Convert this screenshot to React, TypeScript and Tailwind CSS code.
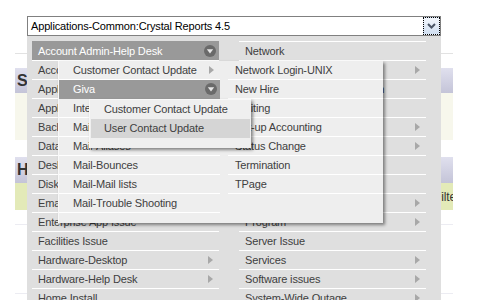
import React from 'react';

type Item = { label: string; sub?: boolean; hl?: boolean };

const leftItems: Item[] = [
  { label: 'Account Admin-Help Desk', hl: true },
  { label: 'Accounts' },
  { label: 'Application Issue' },
  { label: 'Applications-Common' },
  { label: 'Backup' },
  { label: 'Database' },
  { label: 'Desktop' },
  { label: 'Disk Space' },
  { label: 'Email' },
  { label: 'Enterprise App Issue' },
  { label: 'Facilities Issue' },
  { label: 'Hardware-Desktop', sub: true },
  { label: 'Hardware-Help Desk', sub: true },
  { label: 'Home Install' },
];

const rightItems: Item[] = [
  { label: 'Network' },
  { label: 'Network Services', sub: true },
  { label: 'Operating System Installation' },
  { label: 'Password Reset' },
  { label: 'Phones', sub: true },
  { label: 'Printers', sub: true },
  { label: 'Procedures' },
  { label: 'Procurement' },
  { label: 'Product', sub: true },
  { label: 'Program', sub: true },
  { label: 'Server Issue' },
  { label: 'Services', sub: true },
  { label: 'Software issues', sub: true },
  { label: 'System-Wide Outage', sub: true },
];

const subLeft: Item[] = [
  { label: 'Customer Contact Update', sub: true },
  { label: 'Giva', hl: true },
  { label: 'Internet' },
  { label: 'Mail' },
  { label: 'Mail-Aliases' },
  { label: 'Mail-Bounces' },
  { label: 'Mail-Mail lists' },
  { label: 'Mail-Trouble Shooting' },
];

const subRight = ['Network Login-UNIX', 'New Hire', 'Waiting', 'Set-up Accounting', 'Status Change', 'Termination', 'TPage'];

function Arrow() {
  return (
    <svg width="5" height="8" viewBox="0 0 5 8" className="shrink-0">
      <polygon points="0,0 5,4 0,8" fill="#a8a8a8" />
    </svg>
  );
}

function DownCircle() {
  return (
    <svg width="12" height="12" viewBox="0 0 12 12" className="shrink-0 -mr-[3px]">
      <circle cx="6" cy="6" r="6" fill="#6a6a6a" />
      <polygon points="2.8,4.2 9.2,4.2 6,8.4" fill="#e6e6e6" />
    </svg>
  );
}

function MainRow({ item }: { item: Item }) {
  return (
    <div
      className={
        item.hl
          ? 'h-[19px] border-t border-[#999999] bg-[#999999] text-white flex items-center justify-between pl-[6px] pr-[6px]'
          : 'h-[19px] border-t border-white flex items-center justify-between pl-[6px] pr-[6px]'
      }
    >
      <span className="whitespace-nowrap">{item.label}</span>
      {item.hl && <DownCircle />}
      {item.sub && <Arrow />}
    </div>
  );
}

function GivaMenu() {
  return (
    <div className="absolute left-[30px] top-[38px] w-[162px] h-[49px] bg-[#efefef] border-l border-t border-[#f8f8f8] shadow-[2px_2px_3px_rgba(0,0,0,0.45)] px-[1px]">
      <div className="h-[19px] flex items-center pl-[13px] whitespace-nowrap">Customer Contact Update</div>
      <div className="h-[19px] flex items-center pl-[13px] bg-[#d5d5d5] whitespace-nowrap">User Contact Update</div>
    </div>
  );
}

function AccountMenu() {
  return (
    <div className="absolute left-[31px] top-[25px] w-[325px] h-[162px] bg-[#eeeeee] border-l border-[#f8f8f8] shadow-[2px_2px_3px_rgba(0,0,0,0.45)] flex">
      <div className="w-[161px]">
        {subLeft.map((it) => (
          <div
            key={it.label}
            className={
              it.hl
                ? 'h-[19px] border-b border-[#999999] bg-[#999999] text-white flex items-center justify-between pl-[14px] pr-[6px]'
                : 'h-[19px] border-b border-white flex items-center justify-between pl-[14px] pr-[6px]'
            }
          >
            <span className="whitespace-nowrap">{it.label}</span>
            {it.hl && <DownCircle />}
            {it.sub && <Arrow />}
          </div>
        ))}
      </div>
      <div className="ml-[8px] w-[155px]">
        {subRight.map((t) => (
          <div key={t} className="h-[19px] border-b border-white flex items-center pl-[7px] whitespace-nowrap">
            {t}
          </div>
        ))}
      </div>
      <GivaMenu />
    </div>
  );
}

function DropPanel() {
  return (
    <div className="absolute left-[27px] top-[36px] w-[414px] h-[280px] bg-[#dfdfdf] pt-[5px] pl-[5px] text-[#404040]">
      <div className="flex gap-[20px]">
        <div className="w-[187px]">
          {leftItems.map((it) => (
            <MainRow key={it.label} item={it} />
          ))}
        </div>
        <div className="w-[187px]">
          {rightItems.map((it) => (
            <MainRow key={it.label} item={it} />
          ))}
        </div>
      </div>
      <AccountMenu />
    </div>
  );
}

export default function App() {
  return (
    <div className="relative w-[500px] h-[300px] overflow-hidden bg-white font-['Liberation_Sans',Arial,sans-serif] text-[11px] tracking-[-0.15px] text-[#404040]">
      <div className="pl-[15px] pt-[16px] w-[453px]">
        <div className="ml-[12px] w-[414px] h-[20px] border border-[#808080] bg-white flex items-center justify-between pl-[3px] text-[11px] text-black">
          <span>Applications-Common:Crystal Reports 4.5</span>
          <div className="w-[17px] h-[18px] border border-dotted border-black bg-gradient-to-b from-[#f2f6fc] to-[#d0def0] flex items-center justify-center">
            <svg width="9" height="6" viewBox="0 0 9 6">
              <polyline points="1,1 4.5,4.5 8,1" fill="none" stroke="#4a5566" strokeWidth="2" />
            </svg>
          </div>
        </div>
        <div className="mt-[17px] h-px bg-[#e2e2e2]" />
        <div className="mt-[14px] h-[25px] bg-gradient-to-b from-[#e0e0ee] to-[#c4c4d8] pl-[2px] flex items-center text-[16px] font-bold text-[#333333]">S</div>
        <div className="h-[47px] bg-[#f7f7ec]" />
        <div className="mt-[17px] h-[26px] bg-gradient-to-b from-[#e0e0ee] to-[#c4c4d8] pl-[2px] flex items-center text-[16px] font-bold text-[#333333]">H</div>
        <div className="h-[27px] bg-[#e3eab8] overflow-hidden flex items-center pl-[419px] text-[12px] text-[#333333] whitespace-nowrap">Filter</div>
        <div className="mt-[14px] h-px bg-[#ececf2]" />
        <div className="mt-[68px] h-px bg-[#ececf2]" />
      </div>
      <DropPanel />
    </div>
  );
}
